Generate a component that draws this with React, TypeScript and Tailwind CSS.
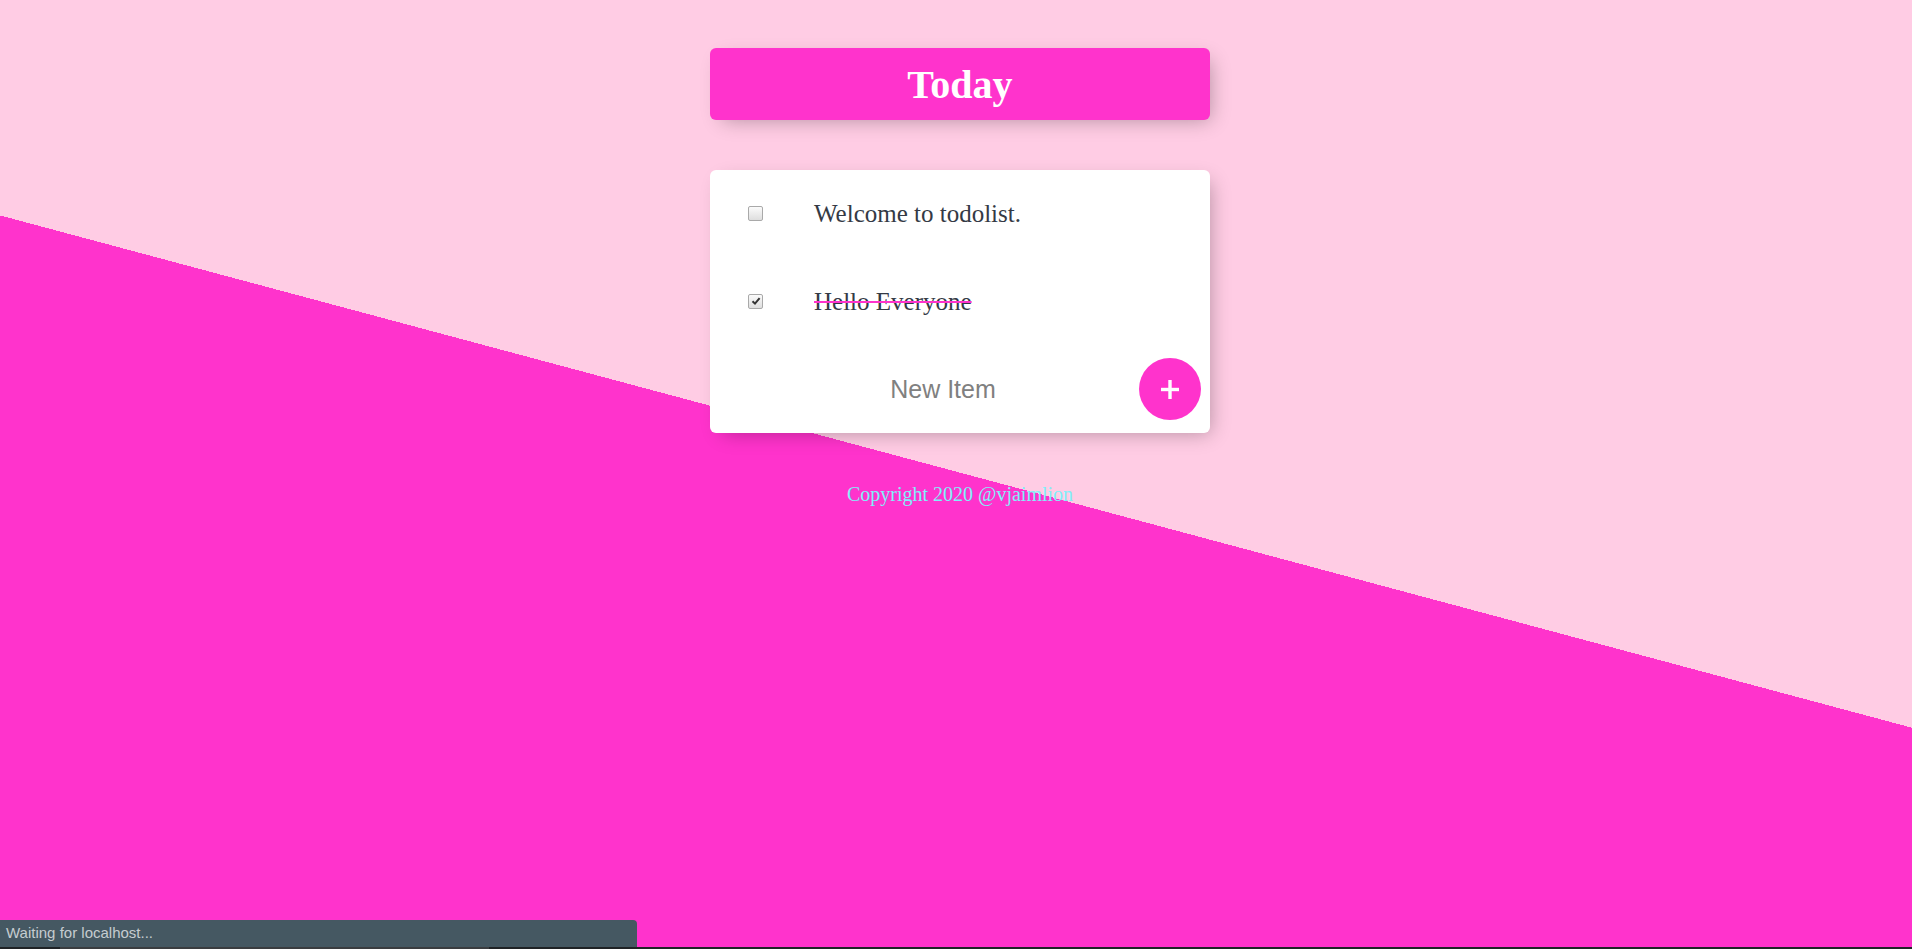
import React, { useState } from 'react';

type Item = { id: number; text: string; done: boolean };

function Checkbox({ checked, onToggle }: { checked: boolean; onToggle: () => void }) {
  return (
    <button
      type="button"
      onClick={onToggle}
      className="w-[15px] h-[15px] shrink-0 rounded-[2px] border border-[#a9a9a9] bg-[linear-gradient(#fbfbfb,#dedede)] flex items-center justify-center"
    >
      {checked && (
        <svg width="10" height="10" viewBox="0 0 10 10">
          <path d="M1.5 5.2 L4 7.6 L8.6 2.2" fill="none" stroke="#333" strokeWidth="2" />
        </svg>
      )}
    </button>
  );
}

export default function App() {
  const [items, setItems] = useState<Item[]>([
    { id: 1, text: 'Welcome to todolist.', done: false },
    { id: 2, text: 'Hello Everyone', done: true },
  ]);
  const [draft, setDraft] = useState('');

  const toggle = (id: number) =>
    setItems(items.map(i => (i.id === id ? { ...i, done: !i.done } : i)));

  const add = () => {
    if (!draft.trim()) return;
    setItems([...items, { id: Date.now(), text: draft, done: false }]);
    setDraft('');
  };

  return (
    <div className="relative min-h-screen w-full overflow-hidden bg-[linear-gradient(195deg,#ffcce4_49.8%,#ff33cc_49.8%)] font-['Liberation_Serif',serif]">
      <div className="pl-[8px]">
        {/* Heading */}
        <div className="mx-auto mt-[48px] w-[500px] h-[72px] rounded-[6px] bg-[#ff33cc] shadow-[6px_6px_19px_-6px_rgba(0,0,0,0.3)] flex items-center justify-center pt-[1px]">
          <h1 className="text-[40px] leading-none font-bold text-white">Today</h1>
        </div>

        {/* List */}
        <div className="mx-auto mt-[50px] w-[500px] rounded-[6px] bg-white shadow-[6px_6px_19px_-6px_rgba(0,0,0,0.3)]">
          {items.map(item => (
            <div key={item.id} className="flex items-center h-[87.5px] pl-[38px]">
              <Checkbox checked={item.done} onToggle={() => toggle(item.id)} />
              <p
                className={`ml-[51px] text-[25px] leading-none text-[#343a45] ${
                  item.done ? 'line-through decoration-[#ff33cc]' : ''
                }`}
              >
                {item.text}
              </p>
            </div>
          ))}

          <form
            className="flex items-center h-[88px] pl-[38px]"
            onSubmit={e => {
              e.preventDefault();
              add();
            }}
          >
            <input
              type="text"
              value={draft}
              onChange={e => setDraft(e.target.value)}
              placeholder="New Item"
              className="w-[390px] h-[75px] text-center text-[25px] font-['Liberation_Sans',Arial,sans-serif] text-[#00204a] placeholder-[#808080] outline-none"
            />
            <button
              type="submit"
              className="ml-[1px] w-[62px] h-[62px] rounded-full bg-[#ff33cc] flex items-center justify-center"
            >
              <svg width="18" height="19" viewBox="0 0 18 19">
                <rect x="7.3" y="0" width="3.4" height="19" fill="#fff" />
                <rect x="0" y="7.8" width="18" height="3.4" fill="#fff" />
              </svg>
            </button>
          </form>
        </div>

        {/* Footer */}
        <footer className="mt-[50px] text-center text-[20px] leading-[23px] text-[#7ff0fa]">
          Copyright 2020 @vjaimlion
        </footer>
      </div>

      {/* Browser status bubble */}
      <div className="absolute left-0 bottom-[2px] h-[27px] w-[637px] rounded-tr-[4px] bg-[#455862] flex items-center pl-[6px] text-[15px] text-[#c5ccd0] font-['Liberation_Sans',Arial,sans-serif]">
        Waiting for localhost...
      </div>
      <div className="absolute left-0 bottom-0 h-[2px] w-full bg-[#1f2326] flex">
        <div className="ml-[60px] w-[429px] h-full bg-[#3a3d40]" />
      </div>
    </div>
  );
}
